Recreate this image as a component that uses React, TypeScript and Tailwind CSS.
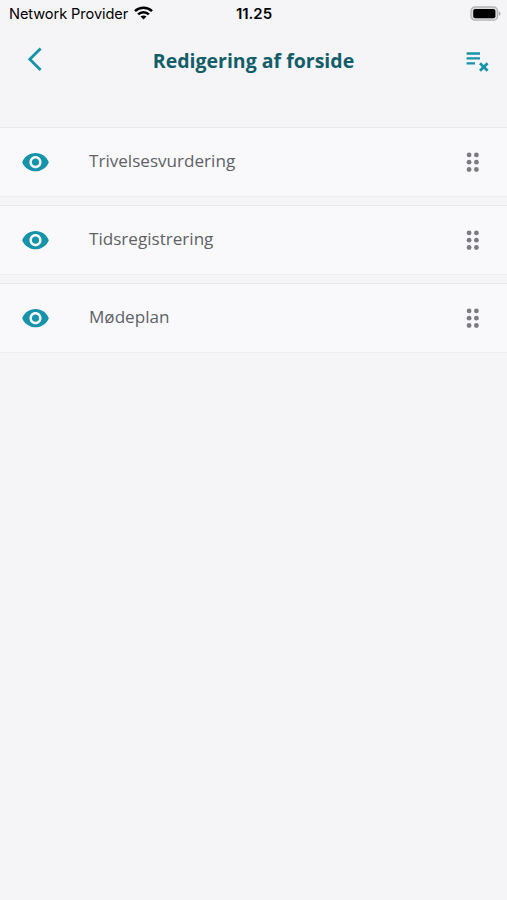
interface FrontPageItem {
  id: string
  label: string
}

const items: FrontPageItem[] = [
  { id: 'wellbeing', label: 'Trivelsesvurdering' },
  { id: 'time', label: 'Tidsregistrering' },
  { id: 'meetings', label: 'Mødeplan' },
]

function WifiIcon() {
  return (
    <svg width="19" height="14" viewBox="0 0 19 14" fill="none" stroke="#000" strokeWidth="2.6">
      <path d="M1 5.1C5.7 0.6 13.3 0.6 18 5.1" />
      <path d="M4.1 8.4C7.1 5.5 11.9 5.5 14.9 8.4" />
      <path d="M9.5 13.6L6.5 10.6C8.2 9 10.8 9 12.5 10.6Z" fill="#000" stroke="none" />
    </svg>
  )
}

function BatteryIcon() {
  return (
    <svg width="31" height="16" viewBox="0 0 31 16">
      <rect x="1" y="1" width="26.6" height="13.2" rx="4" fill="#dcdcde" stroke="#b5b5b7" strokeWidth="1.3" />
      <rect x="3.2" y="3" width="22.2" height="9.2" rx="2" fill="#000" />
      <path d="M28.8 5.3C31 6.1 31 9.1 28.8 9.9Z" fill="#aaaaad" />
    </svg>
  )
}

function BackIcon() {
  return (
    <svg width="16" height="26" viewBox="0 0 16 26" fill="none" stroke="#1493ab" strokeWidth="2.8">
      <path d="M13.6 1.4L2.8 12.2L13.6 23" />
    </svg>
  )
}

function ListRemoveIcon() {
  return (
    <svg width="24" height="22" viewBox="0 0 24 22" fill="none" stroke="#1493ab" strokeWidth="2.3">
      <path d="M0.6 2.5H14M0.6 7.4H14M0.6 12.3H9" />
      <path d="M14 12.2L21.6 19.8M21.6 12.2L14 19.8" strokeWidth="2.7" />
    </svg>
  )
}

function EyeIcon() {
  return (
    <svg width="29" height="29" viewBox="0 0 24 24" fill="#1493ab">
      <path d="M12 4.2C7 4.2 2.73 7.31 1 11.7c1.73 4.39 6 7.5 11 7.5s9.27-3.11 11-7.5c-1.73-4.39-6-7.5-11-7.5zM12 16.7c-2.76 0-5-2.24-5-5s2.24-5 5-5 5 2.24 5 5-2.24 5-5 5zm0-8c-1.66 0-3 1.34-3 3s1.34 3 3 3 3-1.34 3-3-1.34-3-3-3z" />
    </svg>
  )
}

function DragIcon() {
  return (
    <svg width="14" height="20" viewBox="0 0 14 20" fill="#7c7c80">
      {[3.1, 10.4].map((x) =>
        [2.9, 10.2, 17.5].map((y) => <circle key={`${x}-${y}`} cx={x} cy={y} r="2.4" />)
      )}
    </svg>
  )
}

export default function App() {
  return (
    <div className="min-h-screen w-full bg-[#f5f5f8] font-['Open_Sans',sans-serif]">
      {/* Status bar */}
      <div className="grid h-7 grid-cols-[1fr_auto_1fr] items-center pl-[7px] pr-1.5 font-['Inter',sans-serif] text-black">
        <div className="flex items-center gap-1.5 pl-0.5">
          <span className="whitespace-nowrap text-[14.6px] leading-7 tracking-[-0.08px]">Network Provider</span>
          <div className="-mt-0.5">
            <WifiIcon />
          </div>
        </div>
        <span className="text-center text-[15px] font-semibold leading-7">11.25</span>
        <div className="-mt-px flex justify-end">
          <BatteryIcon />
        </div>
      </div>

      <header className="grid h-[66px] grid-cols-[40px_1fr_40px] items-center pl-[27px] pr-[17px]">
        <button className="-mt-0.5 w-6" aria-label="Tilbage">
          <BackIcon />
        </button>
        <h1 className="pr-2.5 text-center text-[19.5px] font-bold text-[#125e68]">Redigering af forside</h1>
        <button className="mt-px justify-self-end" aria-label="Nulstil">
          <ListRemoveIcon />
        </button>
      </header>

      <ul className="mt-[33px] flex flex-col gap-2">
        {items.map((item) => (
          <li
            key={item.id}
            className="flex h-[70px] items-center border-y border-t-[#e9e9ec] border-b-[#eeeef1] bg-[#f9f9fc] pl-[21px] pr-[27px]"
          >
            <EyeIcon />
            <span className="ml-[39px] flex-1 pb-[3px] text-[17.1px] text-[#5f6166]">{item.label}</span>
            <DragIcon />
          </li>
        ))}
      </ul>
    </div>
  )
}
